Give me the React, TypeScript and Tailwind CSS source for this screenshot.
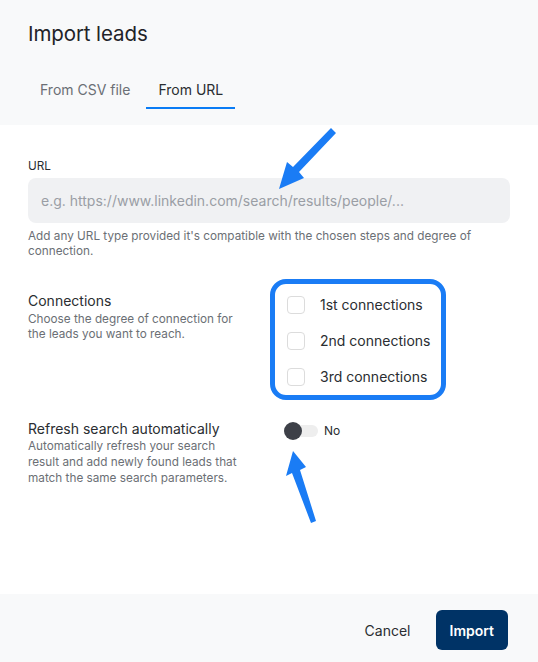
import { useState } from "react";

const OPTIONS = ["1st connections", "2nd connections", "3rd connections"];

function Arrow({ d }: { d: string }) {
  return <path d={d} fill="#1a7cf5" />;
}

export default function App() {
  const [tab, setTab] = useState("url");
  const [checked, setChecked] = useState<string[]>([]);
  const [refresh, setRefresh] = useState(false);

  const toggle = (o: string) =>
    setChecked((c) => (c.includes(o) ? c.filter((x) => x !== o) : [...c, o]));

  return (
    <div
      className="relative flex h-[662px] w-[538px] flex-col bg-white text-[#1f2328]"
      style={{ fontFamily: "Inter, 'Noto Sans', sans-serif" }}
    >
      <header className="bg-[#f8f9fa] px-7 pt-5">
        <h1 className="text-[20.5px] font-normal leading-7 tracking-[-0.1px]">Import leads</h1>
        <div className="mt-8 flex gap-1 text-[14px] leading-5">
          <button
            onClick={() => setTab("csv")}
            className={`px-3 pb-[7px] ${tab === "csv" ? "border-b-2 border-[#0a7cf5] text-[#2a2d31]" : "border-b-2 border-transparent text-[#6b6f75]"}`}
          >
            From CSV file
          </button>
          <button
            onClick={() => setTab("url")}
            className={`px-3 pb-[7px] ${tab === "url" ? "border-b-2 border-[#0a7cf5] text-[#2a2d31]" : "border-b-2 border-transparent text-[#6b6f75]"}`}
          >
            From URL
          </button>
        </div>
        <div className="h-4" />
      </header>

      <main className="flex-1 px-7 pt-[33px]">
        <label className="block text-[11.75px] leading-4 text-[#2a2d31]">URL</label>
        <input
          className="mt-1 h-[45px] w-full rounded-lg bg-[#f0f1f3] px-[13px] text-[14px] outline-none placeholder:text-[#9a9ea5]"
          placeholder="e.g. https://www.linkedin.com/search/results/people/..."
        />
        <p className="mt-[6px] text-[11.75px] leading-[15px] text-[#6b6f75]">
          Add any URL type provided it's compatible with the chosen steps and degree of connection.
        </p>

        <div className="mt-[34px] grid grid-cols-[259px_1fr]">
          <div>
            <div className="text-[14px] leading-4 text-[#2a2d31]">Connections</div>
            <div className="mt-[3px] w-[215px] text-[11.75px] leading-[15px] text-[#6b6f75]">
              Choose the degree of connection for the leads you want to reach.
            </div>
          </div>
          <div className="mt-[3px] flex flex-col gap-[18px]">
            {OPTIONS.map((o) => (
              <label key={o} className="flex cursor-pointer items-center">
                <span
                  onClick={() => toggle(o)}
                  className={`h-[18px] w-[18px] rounded-[4px] border ${checked.includes(o) ? "border-[#0a7cf5] bg-[#0a7cf5]" : "border-[#dcdcdc] bg-white"}`}
                />
                <span className="ml-[15px] text-[14px] leading-[18px] text-[#2a2d31]">{o}</span>
              </label>
            ))}
          </div>
        </div>

        <div className="mt-[35px] grid grid-cols-[256px_1fr]">
          <div>
            <div className="text-[14px] leading-4 text-[#2a2d31]">Refresh search automatically</div>
            <div className="mt-px w-[214px] text-[11.75px] leading-4 text-[#6b6f75]">
              Automatically refresh your search result and add newly found leads that match the same search parameters.
            </div>
          </div>
          <div className="flex items-start">
            <button
              onClick={() => setRefresh((r) => !r)}
              className="relative mt-px h-[18px] w-[35px]"
            >
              <span className="absolute left-[8px] top-[3px] h-[12px] w-[26px] rounded-full bg-[#eeeeee]" />
              <span
                className={`absolute top-0 h-[18px] w-[18px] rounded-full ${refresh ? "left-[17px] bg-[#0a7cf5]" : "left-0 bg-[#3d4048]"}`}
              />
            </button>
            <span className="ml-[5px] text-[12px] leading-5 text-[#2a2d31]">{refresh ? "Yes" : "No"}</span>
          </div>
        </div>
      </main>

      <footer className="flex h-[68px] items-start justify-end gap-[25px] bg-[#f8f9fa] px-[30px] pt-4">
        <button className="h-10 text-[14px] text-[#2a2d31]">Cancel</button>
        <button className="h-10 rounded-md bg-[#003366] px-[14px] text-[14px] font-semibold text-white">
          Import
        </button>
      </footer>

      {/* annotations */}
      <div className="pointer-events-none absolute left-[270px] top-[279px] h-[121px] w-[176px] rounded-[16px] border-[5px] border-[#1a7cf5]" />
      <svg className="pointer-events-none absolute left-0 top-0" width="538" height="662">
        <Arrow d="M331 128 L336 133 L299 172 L304 178 L279 189 L287 162 L293 167 Z" />
        <Arrow d="M293 451 L306 467 L300 470 L316 521 L311 523 L292 473 L286 476 Z" />
      </svg>
    </div>
  );
}
